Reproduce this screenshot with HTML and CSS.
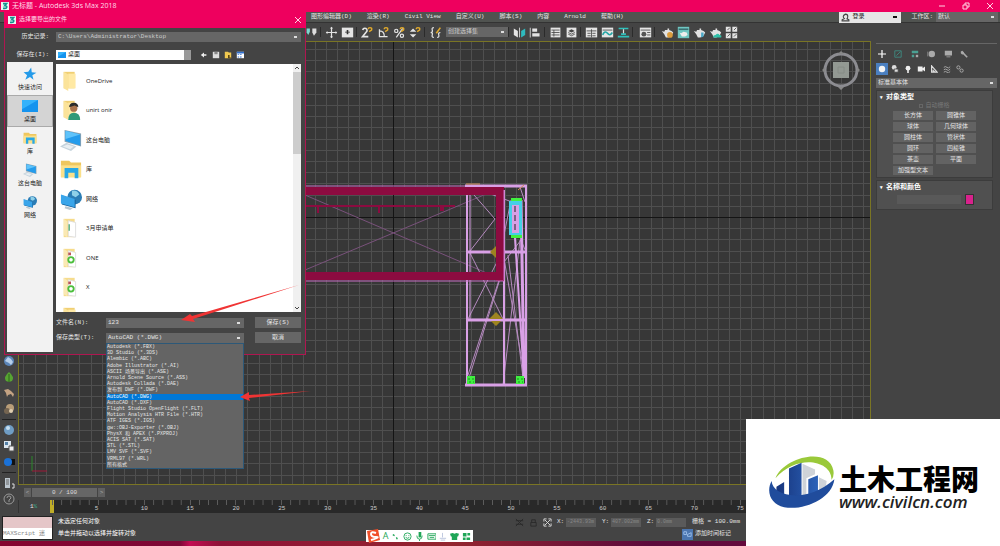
FILE: index.html
```html
<!DOCTYPE html>
<html lang="zh">
<head>
    <meta charset="UTF-8">
    <meta name="viewport" content="width=device-width, initial-scale=1.0">
    <title>无标题 - Autodesk 3ds Max 2018</title>
    <link rel="stylesheet" href="styles.css">
</head>
<body>
    <!-- 公用图标 -->
    <svg class="defs" aria-hidden="true">
        <symbol id="max" viewBox="0 0 8 8"><path fill="#e8f6f5" d="M0 0h8v8H0z"/><path fill="none" stroke="#168f90" stroke-width="1.6" d="M2 1.6h3.6L3.8 3.7c3 0 2.400 2.800-.2 2.700H2"/></symbol>
        <symbol id="folder" viewBox="0 0 24 24"><path fill="#f0cf73" d="M4 2h12v18H4z"/><path fill="#fbe39a" d="M4 2l5 3v18l-5-3z"/><path fill="#ffe9a4" d="M9 4h8v16H9z"/></symbol>
        <symbol id="paper" viewBox="0 0 24 24"><path fill="#f6dc8c" d="M4 2h12v20H4z"/><path fill="#fff" stroke="#ddd" d="M9 4l8 2v16l-8-1z"/><path fill="#fae9b4" d="M4 2l4 3v17l-4-2z"/></symbol>
        <symbol id="desktop" viewBox="0 0 24 18"><path fill="#1593ee" d="M0 0h24v18H0z"/><path fill="#35b2fb" d="M0 0h24L0 14z"/></symbol>
        <symbol id="pc" viewBox="0 0 24 24"><path fill="#c5d3dc" d="M0 19l7-4 11 4-6 5z"/><path fill="#e8eef2" d="M3 19l5-2 7 2-4 3z"/><path fill="#8aa1b0" d="M5 1l18 4v14L5 14z"/><path fill="#249cec" d="M6 2l16 4v12L6 13z"/><path fill="#5fc3fa" d="M6 2l16 4L6 11z"/></symbol>
        <symbol id="lib" viewBox="0 0 24 24"><path fill="#efc75e" d="M1 3h9l2 2h11v16H1z"/><path fill="#fbe08a" d="M1 8h22v13H1z"/><path fill="#28a8e6" d="M5 11h15v11h-4v-6H9v6H5z"/></symbol>
        <symbol id="net" viewBox="0 0 24 24"><circle cx="16" cy="10" r="8" fill="#2b7db5"/><path fill="#8fd0e8" d="M13 3q6-1 8 4l-4 3-4-2z"/><path fill="#14619b" d="M2 8l15 5v9L2 18z"/><path fill="#39a5ea" d="M1 7l15 5v9L1 17z"/><path fill="#b8c6cf" d="M6 20l8 2-3 2-6-2z"/></symbol>
        <symbol id="star" viewBox="0 0 24 24"><path fill="#259be9" d="M14 1l1 8 8 1-7 4 2 8-6-5-8 5 3-8-6-5 8-1z"/></symbol>
        <symbol id="pot" viewBox="0 0 16 16"><path fill="#e2e2e2" d="M1 6l3 1 1-2h3V3h2v2l3 1 2 2-2 4-4 2H6L4 10z"/></symbol>
        <symbol id="snap" viewBox="0 0 16 16"><path fill="none" stroke="#e0a92c" stroke-width="1.800" d="M9 4q0-2 2-2 3 0 2 3l-3 2"/></symbol>
    </svg>

    <div class="app">
        <header class="titlebar">
            <svg class="logo"><use href="#max"/></svg>
            <h1>无标题 - Autodesk 3ds Max 2018</h1>
            <div class="win-btns">
                <button aria-label="最小化"><svg viewBox="0 0 8 8"><path d="M1 4h6"/></svg></button>
                <button aria-label="还原"><svg viewBox="0 0 8 8"><path d="M1 3h4v4H1zM3 3V1h4v4H5"/></svg></button>
                <button aria-label="关闭"><svg viewBox="0 0 8 8"><path d="M1 1l6 6M7 1L1 7"/></svg></button>
            </div>
        </header>

        <nav class="menubar">
            <button>图形编辑器(D)</button>
            <button>渲染(R)</button>
            <button>Civil View</button>
            <button>自定义(U)</button>
            <button>脚本(S)</button>
            <button>内容</button>
            <button>Arnold</button>
            <button>帮助(H)</button>
            <div class="account">
                <svg class="user" viewBox="0 0 8 8"><path d="M4 1q2 0 2 2T5 5l2 1v1H1V6l2-1Q2 4 2 3t2-2z"/></svg>
                <select class="login" aria-label="登录"><option>登录</option></select>
                <label for="space">工作区:</label>
                <select class="combo" id="space"><option>默认</option></select>
            </div>
        </nav>

        <div class="toolbar">
            <button aria-label="选择"><svg viewBox="0 0 16 16"><path fill="#7fd6cf" d="M2 3h4v4L4 11 2 8z"/><path fill="#ddd" d="M9 3h5v5l-3 4-2-4z"/></svg></button>
            <i class="sep"></i>
            <button aria-label="移动"><svg viewBox="0 0 16 16"><path stroke="#e4e4e4" stroke-width="1.500" d="M8 2v12M2 8h12"/><path fill="#e4e4e4" d="M8 1l2 2H6zM8 15l2-2H6zM1 8l2-2v4zM15 8l-2-2v4z"/></svg></button>
            <button aria-label="放置"><svg viewBox="0 0 16 16"><path fill="#e4e4e4" d="M1 2h14v12H1z"/><path fill="#333" d="M7 5h2v2h2v1H9v2H7V8H5V7h2z"/></svg></button>
            <i class="sep"></i>
            <button aria-label="捕捉开关"><svg viewBox="0 0 16 16"><path fill="none" stroke="#e4e4e4" stroke-width="2" d="M2 5q1-3 4-2 3 2 0 5l-4 5h7"/><use href="#snap"/></svg></button>
            <button aria-label="角度捕捉"><svg viewBox="0 0 16 16"><path fill="none" stroke="#e4e4e4" stroke-width="1.500" d="M3 4v9h10M3 6q6 0 6 7"/><use href="#snap"/></svg></button>
            <button aria-label="百分比捕捉"><svg viewBox="0 0 16 16"><path fill="none" stroke="#e4e4e4" stroke-width="1.500" d="M12 3L4 14"/><g fill="none" stroke="#e4e4e4" stroke-width="1.500"><circle cx="4" cy="6" r="2"/><circle cx="11" cy="12" r="2"/></g><use href="#snap"/></svg></button>
            <button aria-label="微调器捕捉"><svg viewBox="0 0 16 16"><path fill="#e4e4e4" d="M5 3l4 4H1zM5 14l4-4H1z"/><use href="#snap"/></svg></button>
            <i class="sep"></i>
            <button aria-label="编辑选择集"><svg viewBox="0 0 16 16"><path fill="none" stroke="#e4e4e4" stroke-width="1.500" d="M6 2Q3 2 4 5t-2 3q3 0 2 3t2 3M10 14q3 0 2-3t2-3"/><path stroke="#e0a92c" stroke-width="2" d="M14 2L9 9"/></svg></button>
            <select class="combo sets" aria-label="创建选择集"><option>创建选择集</option></select>
            <i class="sep"></i>
            <button aria-label="镜像"><svg viewBox="0 0 16 16"><path fill="#e4e4e4" d="M1 3l5 3v8l-5-3z"/><path fill="#2fb9bd" d="M15 3l-5 3v8l5-3z"/><path stroke="#e4e4e4" d="M8 2v12"/></svg></button>
            <button aria-label="对齐"><svg viewBox="0 0 16 16"><path fill="#e4e4e4" d="M1 2h1v12H1zM4 3h6v4H4zM4 9h9v4H4z"/></svg></button>
            <i class="sep"></i>
            <button aria-label="场景资源管理器"><svg viewBox="0 0 16 16"><path fill="#e4e4e4" d="M2 2h12v12H2z"/><path stroke="#444" d="M3 5h10M3 8h10M3 11h10M6 5v8"/></svg></button>
            <button aria-label="层资源管理器"><svg viewBox="0 0 16 16"><path fill="#e4e4e4" d="M2 2h12v12H2z"/><path fill="#444" d="M8 4l4 2-4 2-4-2z"/><path fill="none" stroke="#444" d="M4 8l4 2 4-2M4 10l4 2 4-2"/></svg></button>
            <i class="sep"></i>
            <button aria-label="功能区"><svg viewBox="0 0 16 16"><path fill="#e4e4e4" d="M1 2h14v12H1z"/><path stroke="#444" d="M2 6h12M8 4v10M3 9h4M9 9h4M3 12h4M9 12h4"/></svg></button>
            <button aria-label="曲线编辑器"><svg viewBox="0 0 16 16"><path fill="#e4e4e4" d="M1 2h14v12H1z"/><path stroke="#444" d="M2 5h12"/><path fill="none" stroke="#23a5a5" stroke-width="2" d="M2 11q3-6 6-2t6-1"/></svg></button>
            <button aria-label="图解视图"><svg viewBox="0 0 16 16"><path fill="#2fc0bb" d="M2 2h12v2H2zM1 12h14v2H1zM5 9h6v2H5z"/><path stroke="#e4e4e4" stroke-width="1.500" d="M8 4v5"/></svg></button>
            <i class="sep wide"></i>
            <button aria-label="材质编辑器"><svg viewBox="0 0 16 16"><path fill="#e4e4e4" d="M1 2h14v12H1z"/><path stroke="#444" d="M2 5h12M10 8h4M10 11h4"/><circle cx="6" cy="10" r="3" fill="#555"/></svg></button>
            <i class="sep wide"></i>
            <button aria-label="渲染设置"><svg viewBox="0 0 16 16"><use href="#pot"/><circle cx="11" cy="11" r="3.500" fill="#dc9c3c"/></svg></button>
            <button aria-label="渲染帧窗口"><svg viewBox="0 0 16 16"><path fill="#6fc6c2" d="M1 1h14v14H1z"/><path fill="#3b6f70" d="M2 3h12v2H2z"/><path fill="#eee" d="M3 8l2 1 3-2 4 1 1 3-3 2H6z"/></svg></button>
            <button aria-label="渲染产品"><svg viewBox="0 0 16 16"><use href="#pot"/><path fill="#4aa8c8" d="M10 8h3v5l-3 1z"/></svg></button>
            <button aria-label="在线渲染"><svg viewBox="0 0 16 16"><use href="#pot"/><path fill="#2fc0a8" d="M5 14q0-3 3-3 3-3 5 0 3 0 2 3z"/></svg></button>
            <button aria-label="渲染库"><svg viewBox="0 0 16 16"><path fill="#e4e4e4" d="M1 1h6v6H1zM9 1h6v6H9zM1 9h6v6H1zM9 9h6v6H9z"/><path stroke="#444" d="M3 5l3-3M11 5l3-3M3 13l3-3M11 13l3-3"/></svg></button>
        </div>

        <div class="workspace">
            <aside class="side-tools">
                <button aria-label="云"><svg viewBox="0 0 12 12"><circle cx="6" cy="6" r="5" fill="#5b85b8"/><path fill="#b8d0ea" d="M2 6l3-4 3 2 2 3-2 3-2-2z"/></svg></button>
                <button aria-label="植物"><svg viewBox="0 0 12 12"><path fill="#57a532" d="M6 1q6 5 3 9l-3 1-3-1Q0 6 6 1z"/><path stroke="#2e661b" d="M6 3v8"/></svg></button>
                <button aria-label="动物"><svg viewBox="0 0 12 12"><path fill="#c4a383" d="M1 3l4-1 3 2 3 3-1 3-2-3-3 1-1 2-1-4z"/></svg></button>
                <button aria-label="贝壳"><svg viewBox="0 0 12 12"><circle cx="7" cy="5" r="4" fill="#b89d78"/><circle cx="4" cy="8" r="3" fill="#756551"/><circle cx="8" cy="8" r="2" fill="#e0ceb0"/></svg></button>
                <hr>
                <button aria-label="球体"><svg viewBox="0 0 12 12"><circle cx="6" cy="6" r="5" fill="#6f9dc4"/><circle cx="5" cy="4" r="2" fill="#c6def0"/></svg></button>
                <button aria-label="复制"><svg viewBox="0 0 12 12"><path fill="#dce6ee" d="M1 1h7v7H1z"/><path fill="#5582a8" d="M2 2h3v3H2z"/><path fill="#eee" stroke="#555" d="M6 6h5v5H6z"/></svg></button>
                <button aria-label="切换"><svg viewBox="0 0 12 12"><path fill="#111" d="M6 3h6v6H6z"/><circle cx="5" cy="6" r="4" fill="#1b72d8"/></svg></button>
                <hr>
                <button aria-label="列表"><svg viewBox="0 0 12 12"><path fill="#bcc6ce" d="M2 1h5v10H2z"/><path stroke="#666" d="M3 3h3M3 5h3M3 7h3"/><path fill="none" stroke="#ddd" d="M9 7h2v4H9"/></svg></button>
                <button aria-label="帮助"><svg viewBox="0 0 12 12"><circle cx="6" cy="6" r="5" fill="none" stroke="#999"/><path fill="none" stroke="#999" d="M4 5q0-2 2-2t2 2L6 7v2"/></svg></button>
            </aside>

            <div class="center">
                <div class="stage">
                    <svg class="viewport">
                        <defs>
                            <pattern id="grid" x="393" y="217" width="56" height="56" patternUnits="userSpaceOnUse">
                                <path fill="#4f4f4f" d="M0 0h1v56H0zM11 0h1v56h-1zM22 0h1v56h-1zM34 0h1v56h-1zM45 0h1v56h-1zM0 0h56v1H0zM0 11h56v1H0zM0 22h56v1H0zM0 34h56v1H0zM0 45h56v1H0z"/>
                            </pattern>
                        </defs>
                        <g transform="translate(-19 -42)">
                            <rect width="3000" height="2000" fill="url(#grid)"/>
                            <path fill="#141414" d="M393 0h1v2000h-1zM0 217h3000v1H0z"/>
                            <path stroke="#2c8a2c" d="M32 471v-15"/><path stroke="#a01838" d="M32 471h15"/>
                            <g fill="none" stroke="#7a527c">
                                <path d="M305 195l198 85M305 270l198-83"/>
                            </g>
                            <g fill="none" stroke="#b58abf">
                                <path d="M474 195l21 24-25 32M470 253l33 66M468 319l29-57M467 378l34-104M469 378l35-112M503 253l22 125M503 385l17-145M508 255l15 123M504 262l17-22 5 12M503 240l8-40M480 190l32 12M520 187l5 15"/>
                            </g>
                            <g fill="none" stroke="#d9a0e6" stroke-width="2">
                                <path d="M467 185v201M504 190v195M526 185v201M515 238l9 140"/>
                                <path stroke-width="1" d="M470 187v132"/>
                                <path stroke-width="3" d="M465 186h62M467 252h60M466 320h60M465 385h62M521 200l3 176"/>
                            </g>
                            <path fill="#9e8420" d="M496 246l6 6-6 6-6-6zM496 312l7 7-7 7-7-7z"/>
                            <path stroke="#d9a0e6" stroke-width="2" d="M489 320h14"/>
                            <path fill="#8c0b40" d="M305 187h199v8H305zM305 205h150v2H305zM317 207h2v6h-2zM378 207h2v6h-2zM440 207h4v4h-4zM305 272h199v8H305zM496 187h8v94h-8z"/>
                            <path stroke="#c86fc4" d="M305 186h160M305 281h199M504 190v90"/>
                            <path fill="none" stroke="#d5915c" d="M466 184h14M518 190l6-5"/>
                            <path fill="#40f040" d="M511 198h11v4h-11zM511 234h11v4h-11zM467 376h8v8h-8zM516 376h8v8h-8z"/>
                            <path fill="#45cfe8" d="M509 201h13v34h-13z"/>
                            <path fill="#d7a0e6" d="M512 205h7v28h-7z"/>
                            <path stroke="#222" stroke-dasharray="6 3" d="M515 206v27"/>
                            <path stroke="#1b8c22" stroke-dasharray="2 2" d="M468 379h7M469 382h5M517 379h7M518 382h5"/>
                            <circle cx="841" cy="70" r="16" fill="none" stroke="#8c8c91" stroke-width="3"/>
                            <path fill="#939993" d="M833 62h16v16h-16z"/><path fill="none" stroke="#868c86" d="M838 67h6v6h-6z"/>
                            <path fill="#888" d="M841 51l3 3h-6zM841 90l3-3h-6zM822 70l3-3v6zM860 70l-3-3v6z"/>
                        </g>
                    </svg>

                    <aside class="panel">
                        <div class="tabs">
                            <button aria-label="创建"><svg viewBox="0 0 10 10"><path stroke="#fff" stroke-width="1.500" d="M5 0v10M0 5h10"/></svg></button>
                            <button aria-label="修改"><svg viewBox="0 0 10 10"><path fill="none" stroke="#3e9489" d="M1 9V1h8v8zM3 7l5-5"/></svg></button>
                            <button aria-label="层次"><svg viewBox="0 0 10 10"><path fill="#4ba193" d="M1 1h8v3H1zM1 6h3v3H1z"/><path fill="#aaa" d="M6 6h3v3H6z"/></svg></button>
                            <button aria-label="运动"><svg viewBox="0 0 10 10"><circle cx="6" cy="5" r="4" fill="#aaa"/><path stroke="#999" d="M1 2v6"/></svg></button>
                            <button aria-label="显示"><svg viewBox="0 0 10 10"><path fill="#aaa" d="M1 1h9v6H1zM3 8h5v1H3z"/></svg></button>
                            <button aria-label="实用程序"><svg viewBox="0 0 10 10"><path stroke="#aaa" stroke-width="2" d="M3 3l6 6"/><path fill="#aaa" d="M1 2l2-1 2 2-2 3-2-2z"/></svg></button>
                        </div>
                        <div class="kinds">
                            <button class="on" aria-label="几何体"><svg viewBox="0 0 10 10"><circle cx="5" cy="5" r="4" fill="#f4f4f4"/></svg></button>
                            <button aria-label="图形"><svg viewBox="0 0 10 10"><circle cx="4" cy="3" r="3" fill="#ddd"/><path fill="#ddd" stroke="#444" d="M4 5h5v4H4z"/></svg></button>
                            <button aria-label="灯光"><svg viewBox="0 0 10 10"><circle cx="5" cy="4" r="3" fill="#eee"/><path fill="#eee" d="M4 6h2v4H4z"/></svg></button>
                            <button aria-label="摄影机"><svg viewBox="0 0 10 10"><path fill="#eee" d="M1 2h6v6H1zM7 4l3-2v6L7 6z"/></svg></button>
                            <button aria-label="辅助对象"><svg viewBox="0 0 10 10"><path fill="none" stroke="#ddd" stroke-width="1.500" d="M2 1l7 8H2zM4 6v2h2"/></svg></button>
                            <button aria-label="空间扭曲"><svg viewBox="0 0 10 10"><path fill="none" stroke="#bbb" d="M1 3q2-2 4 0t4-1M1 6q2-2 4 0t4-1M1 9q2-2 4 0t4-1"/></svg></button>
                            <button aria-label="系统"><svg viewBox="0 0 10 10"><g fill="none" stroke="#bbb"><circle cx="3" cy="3" r="2"/><circle cx="7" cy="7" r="2"/></g></svg></button>
                        </div>
                        <select class="combo" aria-label="标准基本体"><option>标准基本体</option></select>
                        <section class="rollout">
                            <h2>对象类型</h2>
                            <label class="auto"><input type="checkbox" disabled>自动栅格</label>
                            <div class="types">
                                <button>长方体</button><button>圆锥体</button>
                                <button>球体</button><button>几何球体</button>
                                <button>圆柱体</button><button>管状体</button>
                                <button>圆环</button><button>四棱锥</button>
                                <button>茶壶</button><button>平面</button>
                                <button>加强型文本</button>
                            </div>
                        </section>
                        <section class="rollout">
                            <h2>名称和颜色</h2>
                            <div class="name-row">
                                <input type="text" aria-label="名称">
                                <button class="swatch" aria-label="颜色"></button>
                            </div>
                        </section>
                    </aside>
                </div>

                <div class="slider">
                    <button>&lt;</button>
                    <button class="thumb">0 / 100</button>
                    <button>&gt;</button>
                </div>
                <div class="timeline">
                    <span class="curve">1<b>%</b></span>
                    <ol class="frames">
                        <li></li><li>5</li><li>10</li><li>15</li><li>20</li><li>25</li><li>30</li><li>35</li><li>40</li><li>45</li>
                        <li>50</li><li>55</li><li>60</li><li>65</li><li>70</li><li>75</li><li></li><li></li><li></li><li></li>
                    </ol>
                </div>
            </div>
        </div>

        <footer class="status">
            <div class="script-box">
                <div class="macro"></div>
                <input type="text" placeholder="MAXScript 迷" aria-label="MAXScript">
            </div>
            <div class="prompt">
                <p>未选定任何对象</p>
                <p>单击并拖动以选择并旋转对象</p>
            </div>
            <div class="coords">
                <div class="coord-row">
                    <svg viewBox="0 0 10 10"><path stroke="#2a2a2a" d="M1 1l8 8M9 1L1 9M1 3h8M1 7h8"/></svg>
                    <svg viewBox="0 0 10 10"><path fill="none" stroke="#2a2a2a" d="M2 5h6v4H2zM3 5V2h4v3"/></svg>
                    <svg viewBox="0 0 10 10"><path fill="none" stroke="#ddd" d="M1 4V1h3M6 1h3v3M9 6v3H6M4 9H1V6M2 2l6 6M8 2L2 8"/></svg>
                    <label for="cx">X:</label><input type="text" id="cx" value="-2443.93m">
                    <label for="cy">Y:</label><input type="text" id="cy" value="407.002mm">
                    <label for="cz">Z:</label><input type="text" id="cz" value="0.0mm">
                    <span>栅格 = 100.0mm</span>
                </div>
                <div class="tag-row">
                    <svg viewBox="0 0 12 12"><path fill="#4b76b0" d="M0 0h12v12H0z"/><path fill="none" stroke="#9dc0ea" d="M2 3h3v3H2zM6 8h4V4L6 6z"/></svg>
                    <button>添加时间标记</button>
                </div>
            </div>
        </footer>
        <div class="taskbar"></div>
    </div>

    <!-- 导出对话框 -->
    <div class="dialog" role="dialog" aria-labelledby="dlg-title">
        <div class="dlg-title">
            <svg class="logo"><use href="#max"/></svg>
            <h2 id="dlg-title">选择要导出的文件</h2>
            <button aria-label="关闭"><svg viewBox="0 0 8 8"><path d="M1 1l6 6M7 1L1 7"/></svg></button>
        </div>
        <div class="dlg-row">
            <label for="history">历史记录:</label>
            <select class="combo grow" id="history"><option>C:\Users\Administrator\Desktop</option></select>
        </div>
        <div class="dlg-row save-in">
            <label for="savein">保存在(I):</label>
            <svg class="mini"><use href="#desktop"/></svg>
            <select class="where" id="savein"><option>桌面</option></select>
            <div class="nav-btns">
                <button aria-label="后退"><svg viewBox="0 0 10 10"><path fill="#eee" d="M1 5l4-3v2h3v2H5v2z"/></svg></button>
                <button aria-label="向上"><svg viewBox="0 0 10 10"><path fill="#ddd" d="M1 1h8v8H1z"/><path fill="#888" d="M3 1h4v3H3z"/></svg></button>
                <button aria-label="新建文件夹"><svg viewBox="0 0 10 10"><path fill="#f0c850" d="M1 1h4l1 1h3v7H1z"/><path fill="#5a4410" d="M5 5h2v3h2v1H5z"/></svg></button>
                <button aria-label="查看"><svg viewBox="0 0 10 10"><path fill="#fff" d="M1 1h9v8H1z"/><path fill="#2e6fd0" d="M1 1h9v2H1zM2 4h2v1H2zM5 4h2v1H5zM2 7h2v1H2zM5 7h2v1H5z"/></svg></button>
            </div>
        </div>
        <div class="dlg-main">
            <nav class="places">
                <button><svg><use href="#star"/></svg>快速访问</button>
                <button class="current"><svg><use href="#desktop"/></svg>桌面</button>
                <button><svg><use href="#lib"/></svg>库</button>
                <button><svg><use href="#pc"/></svg>这台电脑</button>
                <button><svg><use href="#net"/></svg>网络</button>
            </nav>
            <div class="dlg-right">
                <div class="files">
                    <ul>
                        <li><svg><use href="#folder"/></svg>OneDrive</li>
                        <li><svg viewBox="0 0 24 24"><use href="#folder"/><circle cx="15" cy="10" r="4" fill="#a9734c"/><path fill="#2b2b2b" d="M10 9q0-5 5-5t5 5l-4-2z"/><path fill="#2f9a78" d="M9 23q0-8 6-8 7 0 7 8z"/></svg>unirt onir</li>
                        <li><svg><use href="#pc"/></svg>这台电脑</li>
                        <li><svg><use href="#lib"/></svg>库</li>
                        <li><svg><use href="#net"/></svg>网络</li>
                        <li><svg viewBox="0 0 24 24"><use href="#paper"/><path stroke="#4faa72" stroke-width="1.500" d="M10 8v7"/></svg>3月申请单</li>
                        <li><svg viewBox="0 0 24 24"><use href="#paper"/><circle cx="12" cy="14" r="3" fill="none" stroke="#4cbf3c" stroke-width="2"/><path fill="#b55" d="M9 6h3v3H9z"/></svg>ONE</li>
                        <li><svg viewBox="0 0 24 24"><use href="#paper"/><circle cx="12" cy="14" r="3" fill="none" stroke="#4cbf3c" stroke-width="2"/><path fill="#b55" d="M9 6h3v3H9z"/></svg>X</li>
                        <li><svg><use href="#folder"/></svg></li>
                    </ul>
                    <div class="scroll">
                        <svg viewBox="0 0 8 8"><path d="M2 5l2-2 2 2"/></svg>
                        <i></i>
                        <svg viewBox="0 0 8 8"><path d="M2 3l2 2 2-2"/></svg>
                    </div>
                </div>
                <div class="form">
                    <label for="fname">文件名(N):</label>
                    <select class="combo" id="fname"><option>123</option></select>
                    <button>保存(S)</button>
                    <label for="ftype">保存类型(T):</label>
                    <select class="combo" id="ftype"><option>AutoCAD (*.DWG)</option></select>
                    <button>取消</button>
                </div>
            </div>
        </div>
    </div>

    <ul class="type-list" role="listbox" aria-label="保存类型">
        <li>Autodesk (*.FBX)</li>
        <li>3D Studio (*.3DS)</li>
        <li>Alembic (*.ABC)</li>
        <li>Adobe Illustrator (*.AI)</li>
        <li>ASCII 场景导出 (*.ASE)</li>
        <li>Arnold Scene Source (*.ASS)</li>
        <li>Autodesk Collada (*.DAE)</li>
        <li>发布到 DWF (*.DWF)</li>
        <li class="picked">AutoCAD (*.DWG)</li>
        <li>AutoCAD (*.DXF)</li>
        <li>Flight Studio OpenFlight (*.FLT)</li>
        <li>Motion Analysis HTR File (*.HTR)</li>
        <li>ATF IGES (*.IGS)</li>
        <li>gw::OBJ-Exporter (*.OBJ)</li>
        <li>PhysX 和 APEX (*.PXPROJ)</li>
        <li>ACIS SAT (*.SAT)</li>
        <li>STL (*.STL)</li>
        <li>LMV SVF (*.SVF)</li>
        <li>VRML97 (*.WRL)</li>
        <li>所有格式</li>
    </ul>

    <!-- 红色箭头标注 -->
    <svg class="arrows" aria-hidden="true">
        <path d="M181 320l9-6 2 2 107-31-106 34 2 3z"/>
        <path d="M240 397l9-5v3l62-4-62 7 1 3z"/>
    </svg>

    <!-- 输入法 -->
    <div class="ime">
        <svg class="sogou" viewBox="0 0 14 14"><path fill="#f0502a" d="M1 2l11-2 2 11-11 3z"/><path fill="none" stroke="#fff" stroke-width="2" d="M10 4Q5 2 5 5t5 3-5 3"/></svg>
        <b>A</b>
        <svg viewBox="0 0 10 10"><path stroke="#1fa657" stroke-width="1.500" d="M2 3l2 1M6 6l1 2"/></svg>
        <svg viewBox="0 0 10 10"><g fill="none" stroke="#1fa657"><circle cx="5" cy="5" r="4"/><path d="M3 6q2 2 4 0M3 4h1M6 4h1"/></g></svg>
        <svg viewBox="0 0 10 10"><path fill="#1fa657" d="M4 0h3v6H4z"/><path fill="none" stroke="#1fa657" d="M2 4q0 4 3 4t3-4M5 8v2"/></svg>
        <svg viewBox="0 0 10 10"><path fill="none" stroke="#1fa657" d="M1 2h9v6H1zM2 4h7M3 6h5"/></svg>
        <svg viewBox="0 0 10 10"><path fill="none" stroke="#b9c4dc" d="M5 1v5M2 7h7M3 9h5"/></svg>
        <svg viewBox="0 0 10 10"><path fill="#1fa657" d="M0 2l3-1 2 1 2-1 3 1-1 3H8v4H2V5H1z"/></svg>
        <svg viewBox="0 0 10 10"><path fill="#1fa657" d="M1 1h4v4H1zM6 1h3v3H6zM1 6h3v3H1zM5 6h4v3H5z"/></svg>
    </div>

    <!-- 网站水印 -->
    <div class="watermark">
        <svg viewBox="0 0 70 58">
            <defs><linearGradient id="blue"><stop stop-color="#16347c"/><stop offset="1" stop-color="#2c62b8"/></linearGradient></defs>
            <path fill="#9ac93a" d="M7 24C16 2 62-9 67 16q1 6-2 10C66 6 30-2 7 24z"/>
            <path fill="url(#blue)" d="M8 33l8-5v15H8zM21 14l13-6v38H21zM41 25l10-4v19l-10 4z"/>
            <path fill="#cfd3d8" d="M35 9l13 6v5l-9 4v21h-4zM52 23l8 4-1 8-7 4z"/>
            <path fill="#204c9c" d="M3 27c1 16 36 24 65-2-2 20-32 33-52 29C2 51-3 38 3 27z"/>
        </svg>
        <div class="brand">
            <strong>土木工程网</strong>
            <a href="#">www.civilcn.com</a>
        </div>
    </div>
</body>
</html>
```
FILE: styles.css
```css
* { box-sizing: border-box; }
body { margin: 0; height: 100vh; overflow: hidden; background: #444; color: #e4e4e4; font: 6px/8px "Liberation Mono", "Noto Sans CJK SC", monospace; }
h1, h2, p, ul, ol { margin: 0; padding: 0; list-style: none; font-size: inherit; font-weight: normal; }
button, input, select { margin: 0; padding: 0; border: 0; border-radius: 0; background: none; color: inherit; font: inherit; }
svg { display: block; flex: none; }
.defs { position: absolute; width: 0; height: 0; }

.combo { appearance: none; height: 10px; padding: 0 2px; color: #e4e4e4; background: linear-gradient(#ddd, #ddd) right 4px center / 3px 2px no-repeat #666; }

.app { display: flex; flex-direction: column; height: 100vh; }

.titlebar { display: flex; align-items: center; flex: 0 0 12px; padding: 0 6px 0 1px; gap: 3px; background: #ee005e; color: #ffdbe8; font: 7px/12px "Open Sans", "Noto Sans CJK SC", sans-serif; }
.logo { width: 8px; height: 8px; }
.win-btns { display: flex; gap: 16px; margin-left: auto; }
.win-btns svg, .dlg-title button svg { width: 8px; height: 8px; fill: none; stroke: #ffd3e4; }

.menubar { display: flex; align-items: center; flex: 0 0 11px; gap: 15px; padding: 0 2px 0 311px; background: #505350; border-bottom: 1px solid #333; white-space: nowrap; }
.account { display: flex; align-items: center; margin-left: auto; height: 10px; background: #505350; }
.user { width: 13px; height: 11px; padding: 1px 2px; background: #e6e6e6; fill: none; stroke: #444; }
.login { appearance: none; width: 49px; height: 11px; margin-right: 10px; color: #222; background: linear-gradient(#111, #111) right 4px center / 4px 2px no-repeat #e6e6e6; }
.account .combo { width: 62px; margin-left: 3px; }

.toolbar { display: flex; align-items: center; flex: 0 0 18px; padding-left: 304px; background: #444; }
.toolbar button { width: 16px; height: 16px; }
.toolbar button svg { width: 13px; height: 13px; margin: 1px; }
.toolbar .sep { width: 1px; height: 10px; margin-right: 3px; background: #2b2b2b; }
.toolbar .sep.wide { margin-right: 5px; }
.toolbar .sets { width: 62px; margin-left: 2px; color: #ccc; }

.workspace { display: flex; flex: 1; min-height: 0; }
.side-tools { display: flex; flex-direction: column; justify-content: flex-end; align-items: center; flex: 0 0 18px; gap: 4px; padding-bottom: 8px; }
.side-tools svg { width: 12px; height: 12px; }
.side-tools hr { width: 14px; margin: 0; border: 0; border-top: 1px solid #222; }
.center { display: flex; flex: 1; flex-direction: column; min-width: 0; }
.stage { display: flex; flex: 1; min-height: 0; }
.viewport { flex: 1; width: 0; height: 100%; background: #373737; border: 1px solid #7a7524; }

.panel { flex: 0 0 129px; padding: 2px 3px 0 5px; }
.tabs, .kinds { display: flex; border-top: 1px solid #666; }
.tabs { justify-content: space-between; padding: 4px 27px 3px 0; }
.kinds { gap: 1px; padding: 0 0 3px; border: 0; }
.tabs button, .kinds button { width: 12px; height: 12px; }
.tabs svg, .kinds svg { width: 8px; height: 8px; margin: 2px; }
.kinds .on { background: #4a7fc0; }
.panel > .combo { display: block; width: 100%; }
.rollout { margin: 2px 4px 0 0; padding: 1px 16px 2px; background: #505050; border: 1px solid #3c3c3c; }
.rollout h2 { margin: 0 -7px; font: bold 7px/9px "Noto Sans CJK SC", sans-serif; color: #fff; }
.rollout h2::before { content: "▾"; float: left; margin-left: -6px; font-size: 5px; }
.auto { display: flex; align-items: center; justify-content: center; gap: 2px; height: 10px; color: #777; }
.auto input { appearance: none; width: 4px; height: 4px; border: 1px solid #666; }
.types { display: grid; grid-template-columns: 1fr 1fr; gap: 2px 3px; }
.types button { height: 9px; background: #636363; }
.name-row { display: flex; justify-content: space-between; align-items: center; margin: 3px 2px 2px 4px; }
.name-row input { width: 64px; height: 9px; background: #595959; }
.swatch { width: 9px; height: 11px; background: #d8228c; border: 1px solid #333; }

.slider { display: flex; align-items: center; flex: 0 0 15px; gap: 1px; padding-left: 6px; }
.slider button { width: 7px; height: 9px; background: #606060; color: #aaa; }
.slider .thumb { width: 65px; background: #666; color: #ddd; }
.timeline { display: flex; flex: 0 0 13px; }
.curve { flex: 0 0 32px; padding: 3px 0 0 11px; border-left: 1px solid #333; }
.curve b { color: #3ba889; font-weight: normal; }
.frames { display: flex; flex: 1; padding: 0 31px 0 2px; background: #292929; box-shadow: inset 4px 0 #c0ad28; }
.frames li { flex: 1; padding-top: 5px; background: linear-gradient(90deg, #5c5c5c 1px, transparent 1px) 0 0 / 20% 5px repeat-x; color: #ccc; }
.frames li:not(:first-child) { text-indent: -3px; }

.status { display: flex; align-items: flex-start; flex: 0 0 28px; gap: 5px; padding: 3px 0 0 2px; }
.script-box { width: 51px; border: 1px solid #222; }
.macro { height: 11px; background: #e5c6c8; }
.script-box input { display: block; width: 100%; height: 11px; background: #fff; }
.script-box input::placeholder { color: #888; }
.prompt { flex: 1; padding-top: 1px; }
.prompt p { padding: 1px 0 3px; color: #fff; }
.coords { padding-right: 260px; }
.coord-row, .tag-row { display: flex; align-items: center; height: 12px; gap: 3px; }
.coord-row svg { width: 9px; height: 9px; margin-right: 2px; }
.coord-row input { width: 30px; height: 9px; padding-left: 1px; background: #5a5a5a; color: #888; margin-right: 3px; font-size: 5px; }
.coord-row label { width: 6px; }
.tag-row { justify-content: flex-end; padding-right: 9px; gap: 2px; }
.tag-row svg { width: 11px; height: 11px; }
.taskbar { flex: 0 0 5px; background: linear-gradient(90deg, #85052f, #7d0836 18%, #c30b52 19%, #8e1237 22%, #94252f 45%, #5c0a3c 65%, #7a0a40); }

/* 对话框 */
.dialog { position: absolute; left: 4px; top: 12px; width: 302px; height: 343px; display: flex; flex-direction: column; background: #444; border: 1px solid #b01650; border-top: 0; }
.dlg-title { display: flex; align-items: center; flex: 0 0 16px; gap: 3px; margin: 0 -1px; padding: 0 4px; background: #ee005e; color: #ffdbe8; }
.dlg-title button { margin-left: auto; }
.dlg-row { display: flex; align-items: center; height: 10px; margin-top: 4px; padding-right: 4px; }
.dlg-row label { width: 51px; padding-right: 7px; text-align: right; white-space: nowrap; }
.dlg-row.save-in { margin: 8px 0 2px; }
.dlg-row .grow { flex: 1; color: #ccc; }
.mini { width: 12px; height: 10px; padding: 2px; background: #fff; }
.where { appearance: none; width: 123px; height: 10px; color: #222; background: linear-gradient(#999, #999) right / 7px 10px no-repeat #fff; }
.nav-btns { display: flex; gap: 2px; margin-left: 8px; }
.nav-btns svg { width: 10px; height: 10px; padding: 1px; }
.dlg-main { display: flex; flex: 1; min-height: 0; gap: 3px; padding: 0 4px 2px 2px; }
.places { flex: 0 0 46px; padding-top: 1px; background: #f2f2f2; color: #222; }
.places button { display: flex; flex-direction: column; align-items: center; justify-content: center; gap: 3px; width: 100%; height: 32px; }
.places svg { width: 16px; height: 14px; }
.places .current { background: #d4d4d4; border: 1px solid #aaa; }
.dlg-right { display: flex; flex: 1; flex-direction: column; min-width: 0; padding-top: 2px; }
.files { display: flex; flex: 1; min-height: 0; background: #fff; color: #222; }
.files ul { display: flex; flex: 1; flex-direction: column; padding-top: 2px; overflow: hidden; font: 6px/8px "Open Sans", "Noto Sans CJK SC", sans-serif; }
.files li { display: flex; align-items: center; flex: 0 0 12%; gap: 4px; padding-left: 4px; }
.files li svg { width: 22px; height: 22px; }
.scroll { display: flex; flex-direction: column; flex: 0 0 8px; background: #f0f0f0; }
.scroll svg { width: 8px; height: 8px; fill: none; stroke: #444; }
.scroll i { height: 82px; margin-bottom: auto; background: #cdcdcd; }
.form { display: grid; grid-template-columns: 50px 138px 1fr; row-gap: 4px; align-items: center; padding: 5px 0 9px; }
.form button { height: 11px; margin-left: 11px; background: #666; }
.form .combo { width: 100%; }

.type-list { position: absolute; left: 106px; top: 343px; width: 138px; height: 126px; display: grid; grid-auto-rows: 1fr; background: #646464; border: 1px solid #2c5878; font-size: 5px; line-height: 6px; white-space: nowrap; }
.type-list .picked { background: #0078d7; color: #fff; }

.arrows { position: absolute; left: 0; top: 0; width: 320px; height: 410px; fill: #f03434; pointer-events: none; }

.ime { position: absolute; left: 366px; bottom: 4px; display: flex; align-items: center; justify-content: space-between; width: 107px; height: 12px; padding-right: 2px; background: #fff; color: #1fa657; }
.ime svg { width: 9px; height: 9px; }
.ime .sogou { width: 14px; height: 14px; }
.ime b { font: 9px/12px "Open Sans", sans-serif; }

.watermark { position: absolute; right: 0; bottom: 0; display: flex; align-items: center; gap: 2px; width: 254px; height: 127px; padding-left: 22px; background: #fff; }
.watermark svg { width: 69px; height: 56px; }
.brand { padding-top: 8px; }
.brand strong { display: block; color: #000; font: 900 28px/30px "Noto Sans CJK SC", sans-serif; }
.brand a { display: block; color: #222; font: italic 600 17px/18px "Open Sans", sans-serif; text-decoration: none; }
```
